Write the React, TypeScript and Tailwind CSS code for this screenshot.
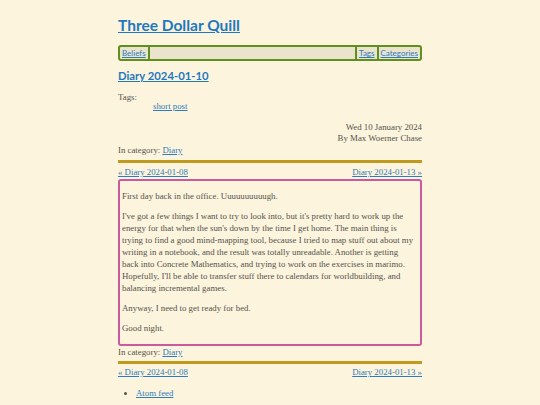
import React from "react";

const serif = { fontFamily: '"Liberation Serif", "DejaVu Serif", serif' };

export default function App() {
  const link = "text-[#2f7bbd] underline";
  const sans = "[font-family:Lato,'Noto_Sans',sans-serif]";
  return (
    <div className="min-h-[405px] bg-[#fcf4dc] text-[#55534d]" style={serif}>
      <div className="mx-auto w-[304px] pt-[14px]">
        <h1 className={`text-[15.5px] font-bold leading-[22px] ${sans}`}>
          <a className="text-[#1f78c1] underline">Three Dollar Quill</a>
        </h1>
        <nav className={`mt-[9px] flex h-[16px] items-stretch rounded-[3px] border-2 border-[#5e8f1f] bg-[#ebe4cc] text-[8px] leading-[12px] ${sans}`}>
          <a className={`${link} border-r-2 border-[#5e8f1f] px-[2px]`}>Beliefs</a>
          <div className="flex-1 border-r-2 border-[#5e8f1f]" />
          <a className={`${link} border-r-2 border-[#5e8f1f] px-[2px]`}>Tags</a>
          <a className={`${link} px-[2px]`}>Categories</a>
        </nav>
        <h2 className={`mt-[6px] text-[11.3px] font-bold leading-[18px] ${sans}`}>
          <a className="text-[#1f78c1] underline">Diary 2024-01-10</a>
        </h2>
        <div className="mt-[8px] text-[8.8px] leading-[9px]">Tags:</div>
        <ul className="pl-[35px] text-[8.8px] leading-[9px]">
          <li>
            <a className={link}>short post</a>
          </li>
        </ul>
        <div className="mt-[11px] text-right text-[8.8px] leading-[11px]">
          <div>Wed 10 January 2024</div>
          <div>By Max Woerner Chase</div>
        </div>
        <div className="text-[8.8px] leading-[12px]">
          In category: <a className={link}>Diary</a>
        </div>
        <hr className="mt-[4px] h-[3px] border-0 bg-[#bf9a1c]" />
        <div className="mt-[3px] flex justify-between text-[8.8px] leading-[12px]">
          <a className={link}>« Diary 2024-01-08</a>
          <a className={link}>Diary 2024-01-13 »</a>
        </div>
        <div className="mt-[1px] rounded-[3px] border-2 border-[#c95a9e] py-[1px] pl-[2px] pr-[5px] text-[8.8px] leading-[12px]">
          <p className="my-[8px]">First day back in the office. Uuuuuuuuuugh.</p>
          <p className="my-[8px]">
            I've got a few things I want to try to look into, but it's pretty hard to work up the energy for that
            when the sun's down by the time I get home. The main thing is trying to find a good mind-mapping tool,
            because I tried to map stuff out about my writing in a notebook, and the result was totally unreadable.
            Another is getting back into Concrete Mathematics, and trying to work on the exercises in marimo.
            Hopefully, I'll be able to transfer stuff there to calendars for worldbuilding, and balancing incremental
            games.
          </p>
          <p className="my-[8px]">Anyway, I need to get ready for bed.</p>
          <p className="mb-[9px] mt-[8px]">Good night.</p>
        </div>
        <div className="text-[8.8px] leading-[12px]">
          In category: <a className={link}>Diary</a>
        </div>
        <hr className="mt-[3px] h-[3px] border-0 bg-[#bf9a1c]" />
        <div className="mt-[2px] flex justify-between text-[8.8px] leading-[12px]">
          <a className={link}>« Diary 2024-01-08</a>
          <a className={link}>Diary 2024-01-13 »</a>
        </div>
        <ul className="mt-[9px] list-disc pl-[18px] text-[8.8px] leading-[12px]">
          <li>
            <a className={link}>Atom feed</a>
          </li>
        </ul>
      </div>
    </div>
  );
}
